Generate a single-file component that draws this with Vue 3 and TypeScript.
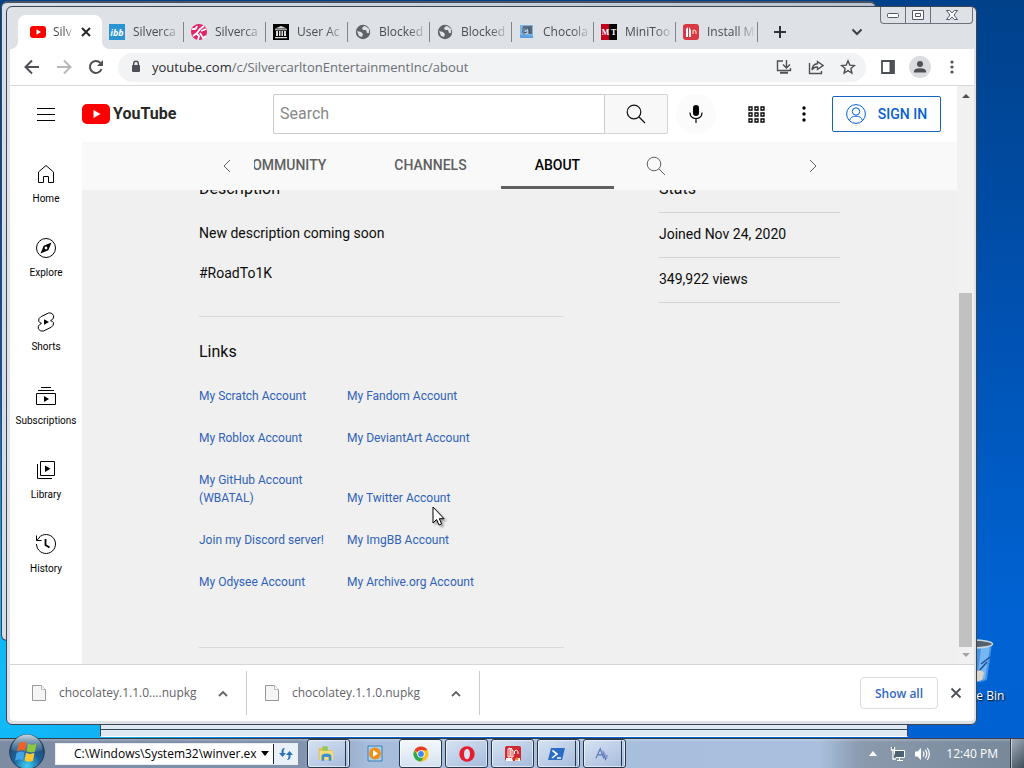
<script setup lang="ts">
import { ref } from 'vue'

interface BrowserTab { title: string; icon: string; active?: boolean }
const browserTabs: BrowserTab[] = [
  { title: 'Silv', icon: 'youtube', active: true },
  { title: 'Silverca', icon: 'ibb' },
  { title: 'Silverca', icon: 'pink' },
  { title: 'User Ac', icon: 'archive' },
  { title: 'Blocked', icon: 'globe' },
  { title: 'Blocked', icon: 'globe' },
  { title: 'Chocola', icon: 'choco' },
  { title: 'MiniToo', icon: 'mt' },
  { title: 'Install M', icon: 'install' },
]

const guide = ['Home', 'Explore', 'Shorts', 'Subscriptions', 'Library', 'History']

const links = [
  'My Scratch Account', 'My Fandom Account',
  'My Roblox Account', 'My DeviantArt Account',
  'My GitHub Account (WBATAL)', 'My Twitter Account',
  'Join my Discord server!', 'My ImgBB Account',
  'My Odysee Account', 'My Archive.org Account',
]

const downloads = ['chocolatey.1.1.0....nupkg', 'chocolatey.1.1.0.nupkg']

const url = { host: 'youtube.com', path: '/c/SilvercarltonEntertainmentInc/about' }
const query = ref('')
const command = ref('C:\\Windows\\System32\\winver.ex')
</script>

<template>
  <div class="desktop">
    <div class="workspace">
      <div class="recycle">
        <svg width="48" height="48" viewBox="0 0 48 48" aria-hidden="true">
          <path d="M6 6h37l-5 36q-13 5-26 0z" fill="#4f9be6" opacity=".85" />
          <path d="M32 10l9-2-5 33-8 2z" fill="#8cc6f7" opacity=".7" />
          <path d="M32 26l9-7M30 33l8-9" stroke="#1d4f9c" stroke-width="1.5" />
          <path d="M26 34q6-4 9 1l-2 7q-5 2-9 1z" fill="#d9d5c8" />
          <ellipse cx="24.500" cy="6" rx="19" ry="4" fill="#56616d" stroke="#c9d8e4" stroke-width="1.500" />
        </svg>
        <span>Recycle Bin</span>
      </div>

      <div class="back-window back-window-lower"></div>
      <div class="back-window back-window-upper"></div>

      <main class="window">
        <header class="tabstrip">
          <nav class="tabs" aria-label="Open tabs">
            <div v-for="(tab, i) in browserTabs" :key="i" class="tab" :class="{ active: tab.active }">
              <svg class="favicon" width="16" height="16" viewBox="0 0 16 16" aria-hidden="true">
                <template v-if="tab.icon === 'youtube'">
                  <rect y="2" width="16" height="12" rx="3" fill="#f00" /><path d="M6.500 5.200v5.600L11 8z" fill="#fff" />
                </template>
                <template v-else-if="tab.icon === 'ibb'">
                  <rect width="16" height="16" fill="#2a94d3" />
                  <text x="8" y="12" text-anchor="middle" class="ibb">ibb</text>
                </template>
                <template v-else-if="tab.icon === 'pink'">
                  <circle cx="8" cy="8" r="8" fill="#e0246b" />
                  <path d="M1 5q4 1 5-3M2 12l4-3 3-4 4-3M7 16l1-4-3-3M9 9l3 5 3-2M10 7l5-2" stroke="#fff" stroke-width="1.800" fill="none" />
                </template>
                <template v-else-if="tab.icon === 'archive'">
                  <rect width="16" height="16" fill="#000" />
                  <path d="M2 4.500L8 2l6 2.500zM2 5.300h12v1H2zM3 7h2v5H3zM6 7h1.500v5H6zM8.500 7H10v5H8.500zM11 7h2v5h-2zM2 13h12v1.200H2z" fill="#ddd" />
                </template>
                <template v-else-if="tab.icon === 'globe'">
                  <circle cx="8" cy="8" r="7.200" fill="#5f6368" />
                  <path d="M2 7l4 1 2 2-1 3-3-1zM9 2l-2 2 1 2 3 0 1 3 2 0 0-4-3-2.500z" fill="#dee1e6" />
                </template>
                <template v-else-if="tab.icon === 'choco'">
                  <rect x="1" y="1" width="13" height="13" fill="#7db4e6" />
                  <path d="M4 2h9v8H9l-4 1-2-3z" fill="#596a7c" /><circle cx="7" cy="7.500" r="3" fill="#a9cbe9" /><path d="M8 5q-4 0-3 4l3-1M10 4v5" stroke="#3c4853" fill="none" />
                  <path d="M1 11l13 1v2H1z" fill="#58a0e2" />
                </template>
                <template v-else-if="tab.icon === 'mt'">
                  <rect width="8" height="16" fill="#c4001d" /><rect x="8" width="8" height="16" fill="#000" />
                  <text x="8" y="11" text-anchor="middle" class="mt">M T</text>
                </template>
                <template v-else>
                  <rect width="16" height="16" rx="3" fill="#d93844" />
                  <path d="M3 13V5l2-2v10zM6 3l2 3v7H6z" fill="#fff" /><path d="M10 10V7q2-2 3 1v2" stroke="#ffc9b8" stroke-width="1.300" fill="none" />
                </template>
              </svg>
              <a href="#" class="tab-title">{{ tab.title }}</a>
              <button v-if="tab.active" class="plain" aria-label="Close tab">
                <svg width="10" height="10" viewBox="0 0 10 10"><path d="M1 1l8 8M9 1l-8 8" stroke="#202124" stroke-width="1.800" /></svg>
              </button>
            </div>
          </nav>
          <button class="plain new-tab" aria-label="New tab">
            <svg width="14" height="14" viewBox="0 0 14 14"><path d="M7 1v12M1 7h12" stroke="#303236" stroke-width="2" /></svg>
          </button>
          <div class="strip-end">
            <button class="plain tab-search" aria-label="Search tabs">
              <svg width="12" height="8" viewBox="0 0 12 8"><path d="M1.500 1.500L6 6l4.500-4.500" stroke="#3c4043" stroke-width="2" fill="none" /></svg>
            </button>
            <div class="caption">
              <button aria-label="Minimize"><svg width="12" height="6" viewBox="0 0 12 6"><rect x=".5" y="1.500" width="11" height="4" rx="1" fill="#fff" stroke="#535666" /></svg></button>
              <button aria-label="Maximize"><svg width="12" height="10" viewBox="0 0 12 10"><path d="M.5.5h11v9H.500zM3.500 3.500h5v3h-5z" fill="#fff" stroke="#535666" /></svg></button>
              <button aria-label="Close"><svg width="12" height="10" viewBox="0 0 12 10"><path d="M.5.5h3.200L6 3 8.300.5h3.200L8 5l3.500 4.500H8.300L6 7 3.700 9.500H.500L4 5z" fill="#fff" stroke="#535666" /></svg></button>
            </div>
          </div>
        </header>

        <div class="toolbar">
          <button class="plain nav-btn" aria-label="Back"><svg width="16" height="16" viewBox="0 0 16 16" class="line"><path d="M15 8H2M8 1.500L1.500 8 8 14.500" /></svg></button>
          <button class="plain nav-btn faded" aria-label="Forward"><svg width="16" height="16" viewBox="0 0 16 16" class="line"><path d="M1 8h13M8 1.500L14.500 8 8 14.500" /></svg></button>
          <button class="plain nav-btn" aria-label="Reload"><svg width="16" height="16" viewBox="0 0 16 16"><path d="M13.500 10.200A6 6 0 1 1 12.300 3.800" stroke="#4d5156" stroke-width="2" fill="none" /><path d="M15 1v6H9z" fill="#4d5156" /></svg></button>
          <div class="omnibox">
            <svg width="16" height="16" viewBox="0 0 16 16" aria-hidden="true"><rect x="4" y="6" width="8" height="7" rx="1" fill="#4d5156" /><path d="M5.700 6V4.500a2.300 2.300 0 0 1 4.600 0V6" stroke="#4d5156" stroke-width="1.400" fill="none" /></svg>
            <a href="#" class="address"><span>{{ url.host }}</span>{{ url.path }}</a>
            <button class="plain nav-btn" aria-label="Install"><svg width="16" height="16" viewBox="0 0 16 16" class="line thin"><path d="M7 2H1.500v9.500h13V9M10.500 1v7M7 5.500L10.500 9 14 5.500" /><path d="M4 13.700h8" stroke-width="2" /></svg></button>
            <button class="plain nav-btn" aria-label="Share"><svg width="16" height="16" viewBox="0 0 16 16" class="line thin"><path d="M1.500 4v10.500h12V12M9.500 2.500L15 6.500l-5.500 4V8Q6 7.500 4 11q.3-6 5.500-6.300z" /></svg></button>
            <button class="plain nav-btn" aria-label="Bookmark"><svg width="16" height="16" viewBox="0 0 16 16" class="line thin"><path d="M8 1.800l1.800 4.300 4.600.4-3.500 3 1 4.500L8 11.600 4.100 14l1-4.500-3.500-3 4.600-.4z" /></svg></button>
          </div>
          <button class="plain nav-btn" aria-label="Side panel"><svg width="14" height="14" viewBox="0 0 14 14"><path d="M1 1h12v12H1z" stroke="#4d5156" stroke-width="1.800" fill="none" /><path d="M8.500 1H13v12H8.500z" fill="#4d5156" /></svg></button>
          <button class="plain nav-btn" aria-label="Profile"><svg width="22" height="22" viewBox="0 0 22 22"><circle cx="11" cy="11" r="11" fill="#dadce0" /><circle cx="11" cy="8" r="3" fill="#4d5156" /><path d="M5 16.500v-1.300q0-3 6-3t6 3v1.300z" fill="#4d5156" /></svg></button>
          <button class="plain nav-btn" aria-label="Menu"><svg width="4" height="14" viewBox="0 0 4 14" fill="#4d5156"><circle cx="2" cy="2" r="1.600" /><circle cx="2" cy="7" r="1.600" /><circle cx="2" cy="12" r="1.600" /></svg></button>
        </div>

        <div class="viewport">
          <div class="page">
            <header class="masthead">
              <div class="brand">
                <button class="plain menu-btn" aria-label="Guide"><svg width="18" height="13" viewBox="0 0 18 13"><path d="M0 .5h18M0 6.500h18M0 12.500h18" stroke="#030303" /></svg></button>
                <a href="#" class="logo">
                  <svg width="28" height="20" viewBox="0 0 28 20" aria-hidden="true"><rect width="28" height="20" rx="5" fill="#f00" /><path d="M11.500 6v8l7-4z" fill="#fff" /></svg>
                  <span>YouTube</span>
                </a>
              </div>
              <form class="search" @submit.prevent>
                <input v-model="query" type="text" placeholder="Search" aria-label="Search">
                <button aria-label="Search"><svg width="20" height="20" viewBox="0 0 20 20" fill="none" stroke="#111" stroke-width="1.200"><circle cx="8" cy="8" r="6.800" /><path d="M13 13l6 6" /></svg></button>
              </form>
              <button class="plain mic" aria-label="Voice search"><svg width="14" height="20" viewBox="0 0 14 20"><rect x="4" y="1" width="6" height="11" rx="3" fill="#030303" /><path d="M1 8.500q0 6 6 6t6-6M7 14.500V19" stroke="#030303" fill="none" stroke-width="1.200" /></svg></button>
              <div class="account">
                <button class="plain" aria-label="Apps"><svg width="17" height="17" viewBox="0 0 17 17" fill="none" stroke="#030303" stroke-width="1.300"><path d="M1 1h3v3H1zM7 1h3v3H7zM13 1h3v3h-3zM1 7h3v3H1zM7 7h3v3H7zM13 7h3v3h-3zM1 13h3v3H1zM7 13h3v3H7zM13 13h3v3h-3z" /></svg></button>
                <button class="plain dots" aria-label="Settings"><svg width="4" height="16" viewBox="0 0 4 16" fill="#030303"><circle cx="2" cy="2" r="1.700" /><circle cx="2" cy="8" r="1.700" /><circle cx="2" cy="14" r="1.700" /></svg></button>
                <button class="signin">
                  <svg width="20" height="20" viewBox="0 0 20 20" fill="none" stroke="#065fd4" aria-hidden="true"><circle cx="10" cy="10" r="9.400" /><circle cx="10" cy="7.500" r="3.700" /><path d="M3.500 16.500q1-4.300 6.500-4.300t6.500 4.300" /></svg>
                  SIGN IN
                </button>
              </div>
            </header>

            <div class="below">
              <nav class="guide">
                <a v-for="item in guide" :key="item" href="#">
                  <svg width="24" height="24" viewBox="0 0 24 24" fill="none" stroke="#030303" aria-hidden="true">
                    <path v-if="item === 'Home'" d="M4.500 10L12 3.500l7.500 6.500v10.500h-5v-6h-5v6h-5z" />
                    <template v-else-if="item === 'Explore'"><circle cx="12" cy="12" r="9.500" /><path d="M17.500 6.500l-3.200 7.800-7.800 3.200 3.200-7.800z" fill="#030303" stroke="none" /><circle cx="12" cy="12" r="1.400" fill="#fff" stroke="none" /></template>
                    <template v-else-if="item === 'Shorts'"><path d="M14.700 2.900L6.900 6.700Q4 8.500 4.700 11.200q.6 1.500 2.800 2.100L6 14.200q-2.500 1.800-1.600 4.600 1.400 3 5 2.300l8-4q2.800-1.800 2-4.500-.8-1.500-2.800-1.900l1.300-.8q2.400-1.600 1.700-4.400Q18 2.200 14.700 2.900z" /><path d="M10 9.300v5.400l5-2.700z" fill="#030303" stroke="none" /></template>
                    <template v-else-if="item === 'Subscriptions'"><path d="M2.500 9.500h19v11h-19zM4 6.500h16M7 3.500h10" /><path d="M10 12v6l5-3z" fill="#030303" stroke="none" /></template>
                    <template v-else-if="item === 'Library'"><path d="M6.500 3.500h14v14h-14zM3.500 6v14.500H18" /><path d="M11 7.500v6.500l5.500-3.200z" fill="#030303" stroke="none" /></template>
                    <template v-else><path d="M4.800 5.800a9.500 9.500 0 1 1-2.300 6.200M2.500 3.500v5h5" /><path d="M2.800 8.300L6 5" /><path d="M11.500 7v6l4 2.500" stroke-width="1.800" /></template>
                  </svg>
                  <span>{{ item }}</span>
                </a>
              </nav>

              <div class="channel">
                <nav class="channel-tabs">
                  <div class="container tab-row">
                    <button class="plain arrow left" aria-label="Previous"><svg width="8" height="14" viewBox="0 0 8 14"><path d="M7 1L1 7l6 6" stroke="#606060" fill="none" /></svg></button>
                    <div class="clip">
                      <a href="#" class="channel-tab">COMMUNITY</a>
                      <a href="#" class="channel-tab">CHANNELS</a>
                      <a href="#" class="channel-tab selected">ABOUT</a>
                      <button class="plain find" aria-label="Search channel"><svg width="20" height="20" viewBox="0 0 20 20" fill="none" stroke="#606060"><circle cx="8" cy="8" r="6.800" /><path d="M13 13l6 6" /></svg></button>
                    </div>
                    <button class="plain arrow right" aria-label="Next"><svg width="8" height="14" viewBox="0 0 8 14"><path d="M1 1l6 6-6 6" stroke="#606060" fill="none" /></svg></button>
                  </div>
                </nav>

                <div class="container about">
                  <div class="left-col">
                    <section class="description">
                      <h2>Description</h2>
                      <p>New description coming soon</p>
                      <p>#RoadTo1K</p>
                    </section>
                    <section class="links">
                      <h2>Links</h2>
                      <div class="link-grid"><a v-for="link in links" :key="link" href="#">{{ link }}</a></div>
                    </section>
                  </div>
                  <section class="stats">
                    <h2>Stats</h2>
                    <p>Joined Nov 24, 2020</p>
                    <p>349,922 views</p>
                  </section>
                </div>
              </div>
            </div>
          </div>
          <div class="scrollbar" aria-hidden="true">
            <svg width="8" height="4" viewBox="0 0 8 4"><path d="M0 4l4-4 4 4z" fill="#505050" /></svg>
            <div class="track"><div class="thumb"></div></div>
            <svg width="8" height="4" viewBox="0 0 8 4"><path d="M0 0l4 4 4-4z" fill="#a3a3a3" /></svg>
          </div>
        </div>

        <footer class="shelf">
          <div v-for="file in downloads" :key="file" class="download">
            <svg width="14" height="16" viewBox="0 0 14 16" aria-hidden="true"><path d="M.5.5h9l4 4v11H.500z" fill="#f5f5f5" stroke="#999" /><path d="M9.500.5v4h4" fill="#fff" stroke="#bbb" /></svg>
            <a href="#">{{ file }}</a>
            <button class="plain" aria-label="File options"><svg width="10" height="7" viewBox="0 0 10 7"><path d="M1 6l4-4 4 4" stroke="#5f6368" stroke-width="1.800" fill="none" /></svg></button>
          </div>
          <div class="shelf-end">
            <button class="show-all">Show all</button>
            <button class="plain" aria-label="Close downloads"><svg width="12" height="12" viewBox="0 0 12 12"><path d="M1.500 1.500l9 9M10.500 1.500l-9 9" stroke="#4d5156" stroke-width="1.800" /></svg></button>
          </div>
        </footer>
      </main>

      <svg class="pointer" width="14" height="22" viewBox="0 0 14 22" aria-hidden="true"><path d="M1 1v16l3.600-3.500L7 19l2.600-1.200-2.300-5.100H12z" fill="#fff" stroke="#000" /></svg>
    </div>

    <footer class="taskbar">
      <button class="plain orb" aria-label="Start">
        <svg width="36" height="36" viewBox="0 0 36 36">
          <defs>
            <radialGradient id="orb" cx=".5" cy=".9" r=".9"><stop offset="0" stop-color="#3fd0f5" /><stop offset=".45" stop-color="#1c5f98" /><stop offset="1" stop-color="#26415f" /></radialGradient>
            <linearGradient id="gloss" x2="0" y2="1"><stop offset="0" stop-color="#dceaf2" stop-opacity=".9" /><stop offset="1" stop-color="#7f9db4" stop-opacity=".2" /></linearGradient>
          </defs>
          <circle cx="18" cy="18" r="17.300" fill="url(#orb)" stroke="#233a52" />
          <path d="M2.500 16a15.500 15.500 0 0 1 31 0q-15 5-31 0z" fill="url(#gloss)" />
          <path d="M10 9.500q4-2.500 7.500-.5L16 17q-4-2-8 .5z" fill="#ee6228" />
          <path d="M19 9.700q4 2.300 8.500 0L26 17.500q-4.500 2-8.500-.2z" fill="#8dc63f" />
          <path d="M7.500 19q4-2.500 8-.5l-1.500 7.800q-4-2-8 .5z" fill="#43a3e8" />
          <path d="M17 18.800q4 2.300 8.500 0L24 26.800q-4.500 2-8.500-.2z" fill="#fdc82f" />
        </svg>
      </button>
      <form class="run" @submit.prevent>
        <input v-model="command" type="text" aria-label="Address">
        <button type="button" aria-label="History"><svg width="8" height="5" viewBox="0 0 8 5"><path d="M0 0h8L4 5z" fill="#000" /></svg></button>
        <button class="refresh" aria-label="Refresh"><svg width="16" height="14" viewBox="0 0 16 14"><path d="M7 1Q3 1 3.500 6H1l3.500 4L8 6H5.500Q5 3 7 1zM9 13q4 0 3.500-5H15l-3.500-4L8 8h2.500q.5 3-1.500 5z" fill="#2c72b8" /></svg></button>
      </form>
      <nav class="apps" aria-label="Running programs">
        <button class="app stacked" aria-label="Explorer"><svg width="18" height="17" viewBox="0 0 20 18"><path d="M2 3h6l2 2h7v11H2z" fill="#e3c04f" /><path d="M6 1h6v7H6z" fill="#8fc94f" /><path d="M3 6h15v10H3z" fill="#f5dc7d" /><path d="M5 17v-5q0-3 5.500-3t5.500 3v5h-3v-4H8v4z" fill="#3f92d0" /></svg></button>
        <button class="app bare" aria-label="Media Player"><svg width="16" height="17" viewBox="0 0 16 17"><path d="M1 1h14v15H1z" fill="#a9d2ef" stroke="#3c7fb5" /><circle cx="8" cy="8.500" r="6" fill="#f09018" /><path d="M6 5v7l5-3.500z" fill="#fff" /></svg></button>
        <button class="app current" aria-label="Chrome"><svg width="16" height="16" viewBox="0 0 16 16"><circle cx="8" cy="8" r="7.500" fill="#fbc116" /><path d="M8 8L1.500 4.200A7.500 7.500 0 0 1 14.500 4.200H8z" fill="#e33b2e" /><path d="M1.500 4.200A7.500 7.500 0 0 0 8 15.500L11 10 8 8 5 10z" fill="#2da94f" /><circle cx="8" cy="8" r="3.700" fill="#fff" /><circle cx="8" cy="8" r="2.900" fill="#4285f4" /></svg></button>
        <button class="app" aria-label="Opera"><svg width="16" height="16" viewBox="0 0 16 16"><circle cx="8" cy="8" r="7.700" fill="#e51b2e" /><ellipse cx="8" cy="8" rx="3" ry="5.300" fill="#d9e3f2" /></svg></button>
        <button class="app" aria-label="Installer"><svg width="16" height="18" viewBox="0 0 16 18"><rect y="1" width="16" height="15" rx="2" fill="#d0282f" /><path d="M3 12V4l2-1v9zM6 3l2 3v6H6zM9.500 9V6q2-2 3.500.5V9" fill="none" stroke="#fff" /><path d="M1 13h6l1 3H1zM11 13h4v3h-5z" fill="#fff" /><circle cx="12" cy="14" r="1.500" fill="#ef8b2c" /></svg></button>
        <button class="app stacked" aria-label="PowerShell"><svg width="17" height="14" viewBox="0 0 17 14"><path d="M3 1h14l-3 12H0z" fill="#2b6cc4" /><path d="M4.500 3.500L9 7l-5 4M9 11h4" stroke="#fff" stroke-width="1.600" fill="none" /></svg></button>
        <button class="app stacked" aria-label="Utility"><svg width="14" height="14" viewBox="0 0 16 16" fill="none" stroke="#5874b8" stroke-width="1.300"><path d="M1 13L6 2l4 11M3 9h6M9 5l3 9 2-5" /><path d="M9 4l5 9" stroke="#8b9dd5" /></svg></button>
      </nav>
      <div class="tray">
        <button class="plain" aria-label="Hidden icons"><svg width="8" height="5" viewBox="0 0 8 5"><path d="M0 5l4-5 4 5z" fill="#fff" /></svg></button>
        <button class="plain net" aria-label="Network"><svg width="16" height="16" viewBox="0 0 16 16" fill="#4c6272" stroke="#fff"><path d="M4.500 4.500h10v7h-10zM7 14.500h6M9.500 11.500v3" /><path d="M1.500 1v3h3V1M3 4v9h3" stroke-width="1.300" /></svg></button>
        <button class="plain" aria-label="Volume"><svg width="16" height="14" viewBox="0 0 16 14"><path d="M1 4.500h2.500L7 1v12L3.500 9.500H1z" fill="#fff" /><path d="M9 4.500q2 2.500 0 5M11.300 2.800q3 4.200 0 8.400M13.300 1q4 6 0 12" stroke="#fff" fill="none" stroke-width="1.200" /></svg></button>
        <time>12:40 PM</time>
      </div>
      <button class="show-desktop" aria-label="Show desktop"></button>
    </footer>
  </div>
</template>

<style>
html, body { margin: 0; height: 100%; overflow: hidden; }
</style>

<style scoped>
* { box-sizing: border-box; }
a { text-decoration: none; color: inherit; }
h2, p { margin: 0; font-weight: 400; }
button, input { font: inherit; margin: 0; padding: 0; }
svg { display: block; flex: none; }
.plain { border: 0; background: none; display: flex; align-items: center; justify-content: center; flex: none; }

.desktop {
  height: 100vh; display: flex; flex-direction: column;
  font: 13px "Open Sans", "Noto Sans", sans-serif;
  background:
    radial-gradient(circle at 0 90%, #12bcf8 0, #10b2f4 110px, transparent 320px),
    linear-gradient(#00418a, #0051b0 40%, #0063d3 80%, #0062d2);
}
.workspace { flex: 1; position: relative; min-height: 0; }
.recycle {
  position: absolute; right: 14px; bottom: 34px; width: 74px;
  display: flex; flex-direction: column; align-items: center; gap: 2px;
  color: #fff; font-size: 12px; line-height: 16px; text-shadow: 1px 1px 2px #000; white-space: nowrap;
}
.back-window { position: absolute; background: #c3cad6; border: 1px solid #3c4452; }
.back-window-upper { left: 1px; top: 1px; right: 148px; bottom: 97px; border-radius: 6px; background: linear-gradient(90deg, #d5dde8, #b9c3d0); border-top: 2px solid #4a5262; }
.back-window-lower { left: 100px; right: 116px; top: 400px; bottom: 1px; background: #dfe8f1; border-bottom-color: #fff; }
.back-window-lower::after { content: ""; position: absolute; left: 0; right: 0; bottom: 6px; border-top: 1px solid #2e4860; }

.window {
  position: absolute; left: 6px; top: 6px; right: 47px; bottom: 13px;
  border: 1px solid #3d4452; border-radius: 6px; background: #dee1e6;
  padding: 0 2px 3px 3px; display: flex; flex-direction: column; overflow: hidden;
}
.tabstrip { height: 42px; flex: none; display: flex; padding-left: 8px; }
.tabs { display: flex; padding-top: 8px; flex: 0 1 740px; min-width: 0; }
.tab { flex: 1 1 0; min-width: 0; display: flex; align-items: center; gap: 8px; padding: 0 2px 0 7px; color: #4a4d52; position: relative; }
.tab + .tab:not(:nth-child(2))::before, .tab:last-child::after { content: ""; position: absolute; left: -1px; top: 7px; height: 20px; width: 1px; background: #80858c; }
.tab:last-child::after { left: auto; right: 0; }
.tab.active { flex: 0 0 84px; background: #fff; border-radius: 8px 8px 0 0; padding: 0 11px 0 12px; gap: 7px; }
.tab.active::before, .tab.active::after { content: ""; position: absolute; bottom: 0; width: 8px; height: 8px; }
.tab.active::before { left: -8px; background: radial-gradient(circle at 0 0, transparent 8px, #fff 8px); }
.tab.active::after { right: -8px; background: radial-gradient(circle at 100% 0, transparent 8px, #fff 8px); }
.tab-title { flex: 1; min-width: 0; overflow: hidden; white-space: nowrap; font-size: 12px; line-height: 20px; mask-image: linear-gradient(90deg, #000 60%, transparent); }
.ibb { font: italic bold 9px "Open Sans", sans-serif; fill: #fff; }
.mt { font: bold 8px "Liberation Serif", serif; fill: #fff; }
.new-tab { margin: 10px 0 0 15px; height: 30px; }
.strip-end { flex: 1; display: flex; justify-content: flex-end; align-items: flex-start; }
.tab-search { margin: 10px 17px 0 0; height: 30px; }
.caption { display: flex; border: 1px solid #6c727d; border-top: 0; border-radius: 0 0 4px 4px; height: 17px; margin-right: 1px; }
.caption button { width: 25px; border: 0; border-right: 1px solid #6c727d; background: none; display: flex; align-items: center; justify-content: center; }
.caption button:last-child { width: 41px; border-right: 0; }

.toolbar { height: 37px; flex: none; background: #fff; border-bottom: 1px solid #d5d7da; display: flex; align-items: center; padding: 0 6px; }
.nav-btn { width: 32px; height: 28px; }
.faded { opacity: .4; }
.line { fill: none; stroke: #4d5156; stroke-width: 2; }
.line.thin { stroke-width: 1.4; }
.omnibox { flex: 1; min-width: 0; height: 29px; border-radius: 15px; background: #f1f3f4; display: flex; align-items: center; padding: 0 2px 0 10px; margin: 0 6px; }
.address { flex: 1; min-width: 0; margin-left: 8px; font-size: 13px; line-height: 20px; color: #6b6f74; white-space: nowrap; overflow: hidden; }
.address span { color: #2b2d31; }

.viewport { flex: 1; min-height: 0; display: flex; background: #fff; overflow: hidden; }
.page { flex: 1; min-width: 0; display: flex; flex-direction: column; font-family: Roboto, "Liberation Sans", sans-serif; }
.masthead { height: 56px; flex: none; display: flex; align-items: center; padding: 0 16px 0 27px; }
.brand { display: flex; align-items: center; gap: 27px; width: 236px; flex: none; }
.logo { display: flex; align-items: center; gap: 3px; font-size: 16px; font-weight: 700; line-height: 20px; color: #282828; }
.search { flex: 0 1 395px; min-width: 0; height: 40px; display: flex; }
.search input { flex: 1; min-width: 0; border: 1px solid #ccc; border-right: 0; border-radius: 2px 0 0 2px; background: #fff; padding: 0 6px 2px; font-size: 16px; color: #111; }
.search input::placeholder { color: #888; opacity: 1; }
.search button { width: 64px; border: 1px solid #d3d3d3; border-left-color: #ccc; border-radius: 0 2px 2px 0; background: #f8f8f8; display: flex; align-items: center; justify-content: center; }
.mic { width: 40px; height: 40px; border-radius: 20px; background: #fbfbfb; margin-left: 8px; }
.account { margin-left: auto; flex: none; display: flex; align-items: center; }
.account .plain { width: 48px; height: 40px; }
.signin { margin-left: 4px; width: 109px; height: 36px; border: 1px solid #1565c0; border-radius: 2px; background: #fff; color: #065fd4; font-size: 14px; font-weight: 500; display: flex; align-items: center; justify-content: center; gap: 12px; white-space: nowrap; }

.below { flex: 1; min-height: 0; display: flex; }
.guide { width: 72px; flex: none; padding-top: 4px; }
.guide a { height: 74px; padding-top: 16px; display: flex; flex-direction: column; align-items: center; gap: 6px; font-size: 10px; line-height: 14px; color: #030303; }
.channel { flex: 1; min-width: 0; background: #f0f0f0; overflow: hidden; }
.channel-tabs { height: 48px; background: #f9f9f9; position: relative; z-index: 1; }
.container { width: 74%; max-width: 641px; margin: 0 auto; }
.tab-row { display: flex; height: 48px; }
.clip { flex: 1; min-width: 0; display: flex; justify-content: flex-start; overflow: hidden; }
.arrow { width: 55px; }
.channel-tab { padding: 0 34px; font-size: 14px; font-weight: 500; line-height: 46px; color: #606060; flex: none; border-bottom: 3px solid transparent; height: 47px; }
.channel-tab:first-child { margin-left: -45px; }
.selected { color: #030303; border-bottom-color: #606060; }
.find { width: 48px; margin-left: 18px; }
.about { display: grid; grid-template-columns: 365px 181px; justify-content: space-between; color: #0d0d0d; }
.about h2 { font-size: 16px; line-height: 22px; margin-top: -12px; }
.description { height: 139px; border-bottom: 1px solid #d9d9d9; }
.description p { font-size: 14px; line-height: 20px; margin-top: 20px; }
.description h2 + p { margin-top: 23px; }
.links { border-bottom: 1px solid #d9d9d9; padding-top: 24px; height: 331px; }
.links h2 { margin: 0 0 24px; }
.link-grid { display: grid; grid-template-columns: 132px 132px; column-gap: 16px; row-gap: 24px; align-items: end; font-size: 12px; line-height: 18px; color: #2f62b8; }
.stats h2 { margin-bottom: 12px; }
.stats p { font-size: 14px; line-height: 20px; padding: 11px 0 13px; border-top: 1px solid #d3d3d3; }
.stats p:last-child { border-bottom: 1px solid #d3d3d3; }

.scrollbar { width: 17px; background: #f1f1f1; display: flex; flex-direction: column; align-items: center; padding: 8px 0 7px; }
.track { flex: 1; width: 13px; display: flex; flex-direction: column; justify-content: flex-end; margin: 5px 0 6px; }
.thumb { height: 65%; background: #c1c1c1; }

.shelf { height: 57px; flex: none; background: #fff; border-top: 1px solid #d5d5d5; display: flex; align-items: center; border-radius: 0 0 4px 4px; }
.download { height: 44px; display: flex; align-items: center; padding: 0 13px 0 18px; border-right: 1px solid #c9cbce; color: #5f6368; width: 233px; }
.download:first-child { padding-left: 22px; width: 237px; }
.download a { flex: 1; margin-left: 13px; font-size: 12px; line-height: 20px; white-space: nowrap; }
.download .plain { width: 20px; height: 20px; }
.shelf-end { flex: 1; display: flex; align-items: center; justify-content: flex-end; padding-right: 12px; gap: 12px; }
.show-all { width: 78px; height: 32px; border: 1px solid #dadce0; border-radius: 4px; background: #fff; color: #3367c6; font-size: 12px; font-weight: 600; }
.pointer { position: absolute; left: 432px; top: 506px; filter: drop-shadow(2px 2px 1px rgba(0, 0, 0, .35)); }

.taskbar {
  height: 30px; flex: none; display: flex; align-items: stretch; border-top: 1px solid #343d4b;
  background: linear-gradient(rgba(255, 255, 255, .25), transparent 3px), linear-gradient(90deg, #7e8ca3, #7f91ab 29%, #a6bddb 36%, #a8c0de 80%, #8b9aad 84%, #76879a);
}
.orb { width: 36px; height: 36px; margin: -5px 10px 0 9px; position: relative; }
.run { display: flex; align-self: center; height: 22px; width: 243px; background: #fff; border: 1px solid #e9edf2; flex: none; }
.run input { flex: 1; min-width: 0; border: 0; background: none; padding: 0 0 0 18px; font-size: 12px; color: #000; outline: 0; }
.run button { width: 16px; border: 0; background: none; display: flex; align-items: center; justify-content: center; }
.run .refresh { width: 24px; border-left: 1px solid #1d2733; background: #e9f0f8; }
.apps { display: flex; gap: 3px; margin-left: 9px; }
.app { width: 43px; border: 1px solid #26364d; border-radius: 3px; background: linear-gradient(150deg, #d7e3f3, #a5badb); box-shadow: inset 0 0 0 1px rgba(255, 255, 255, .6); display: flex; align-items: center; justify-content: center; }
.app.current { background: linear-gradient(#f4f8fc, #d5e2f2); }
.app.stacked { padding-right: 5px; background: linear-gradient(90deg, transparent 37px, #26364d 37px, #26364d 38px, transparent 38px), linear-gradient(150deg, #d7e3f3, #a5badb); }
.app.bare { background: none; border-color: transparent; box-shadow: none; }
.tray { flex: 1; display: flex; align-items: center; justify-content: flex-end; gap: 8px; padding-right: 12px; color: #fff; }
.tray .net { margin-left: 5px; }
.tray time { font-size: 12px; line-height: 16px; margin-left: 8px; white-space: nowrap; }
.show-desktop { width: 14px; border: 1px solid #2f3b49; border-width: 0 0 0 1px; background: linear-gradient(135deg, #a4afbc, #3f4d5c); box-shadow: inset 1px 0 0 rgba(255, 255, 255, .5); }
</style>
